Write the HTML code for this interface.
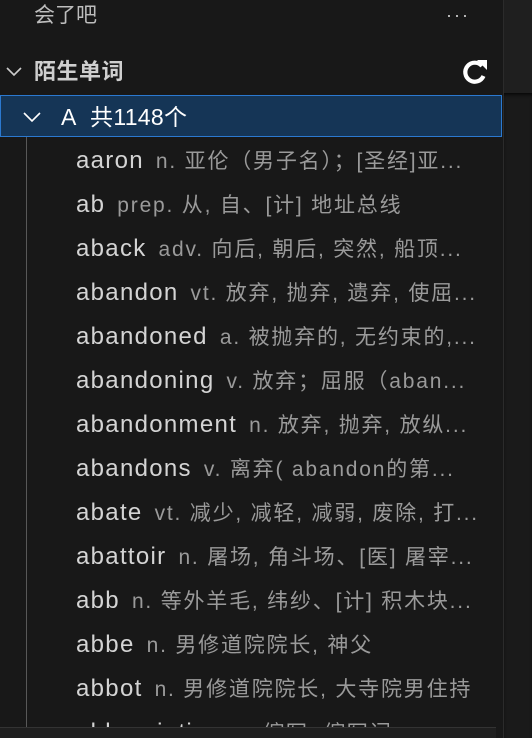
<!DOCTYPE html><html><head><meta charset="utf-8"><style>
html,body{margin:0;width:532px;height:738px;overflow:hidden}
body{background:#181818;font-family:"Liberation Sans","Noto Sans CJK SC",sans-serif;color:#cccccc;position:relative}
.side{position:absolute;left:0;top:0;width:503px;height:738px;background:#181818;border-right:1px solid #2b2b2b}
.right{position:absolute;left:504px;top:0;width:28px;height:93px;background:#1f1f1f}
.right2{position:absolute;left:504px;top:93px;width:28px;height:645px;background:#1a1a1a;box-shadow:inset 0 3px 4px -2px #000}
.t{position:absolute;white-space:nowrap;font-size:22px;line-height:44px}
.row{position:absolute;left:76px;height:44px;line-height:44px;font-size:24px;letter-spacing:1.3px;white-space:nowrap;color:#d4d4d4}
.row span{font-size:21px;letter-spacing:1.8px;color:#9a9a9a;margin-left:12px}
.sel{position:absolute;left:0;top:95px;width:500px;height:40px;background:#153556;border:1px solid #2b79d0}
.guide{position:absolute;left:26px;top:137px;width:1px;height:590px;background:#585858}
.bot{position:absolute;left:0;top:727px;width:496px;height:11px;background:#1f1f1f;border-top:1px solid #333}
</style></head><body>
<div class="side"></div><div class="right"></div><div class="right2"></div>
<div class="t" style="left:34px;top:-6px;font-size:21px;color:#bdbdbd">会了吧</div>
<div class="t" style="left:446px;top:-7px;font-size:18px;letter-spacing:2px;color:#ccc">···</div>
<svg style="position:absolute;left:5px;top:64px" width="18" height="14"><path d="M2 4 L9 11 L16 4" fill="none" stroke="#ccc" stroke-width="1.6"/></svg>
<div class="t" style="left:34px;top:50px;font-weight:bold;color:#cfcfcf;letter-spacing:0.5px">陌生单词</div>
<svg style="position:absolute;left:460px;top:57px" width="32" height="30" viewBox="0 0 32 30"><path d="M22 9 A9.5 9.5 0 1 0 23.5 19" fill="none" stroke="#fff" stroke-width="4.2"/><path d="M17 3 L27 3 L27 13 Z" fill="#fff"/></svg>
<div class="sel"></div>
<svg style="position:absolute;left:22px;top:110px" width="20" height="14"><path d="M2 3 L10 11 L18 3" fill="none" stroke="#fff" stroke-width="1.6"/></svg>
<div class="t" style="left:61px;top:95px;color:#fff;font-size:23px;letter-spacing:0.3px">A&nbsp; 共1148个</div>
<div class="guide"></div>
<div class="row" style="top:139px">aaron<span>n. 亚伦（男子名）；[圣经]亚...</span></div>
<div class="row" style="top:183px">ab<span>prep. 从, 自、[计] 地址总线</span></div>
<div class="row" style="top:227px">aback<span>adv. 向后, 朝后, 突然, 船顶...</span></div>
<div class="row" style="top:271px">abandon<span>vt. 放弃, 抛弃, 遗弃, 使屈...</span></div>
<div class="row" style="top:315px">abandoned<span>a. 被抛弃的, 无约束的,...</span></div>
<div class="row" style="top:359px">abandoning<span>v. 放弃；屈服（aban...</span></div>
<div class="row" style="top:403px">abandonment<span>n. 放弃, 抛弃, 放纵...</span></div>
<div class="row" style="top:447px">abandons<span>v. 离弃( abandon的第...</span></div>
<div class="row" style="top:491px">abate<span>vt. 减少, 减轻, 减弱, 废除, 打...</span></div>
<div class="row" style="top:535px">abattoir<span>n. 屠场, 角斗场、[医] 屠宰...</span></div>
<div class="row" style="top:579px">abb<span>n. 等外羊毛, 纬纱、[计] 积木块...</span></div>
<div class="row" style="top:623px">abbe<span>n. 男修道院院长, 神父</span></div>
<div class="row" style="top:667px">abbot<span>n. 男修道院院长, 大寺院男住持</span></div>
<div class="row" style="top:711px">abbreviation<span>n. 缩写, 缩写词</span></div>
<div class="bot"></div>
</body></html>
